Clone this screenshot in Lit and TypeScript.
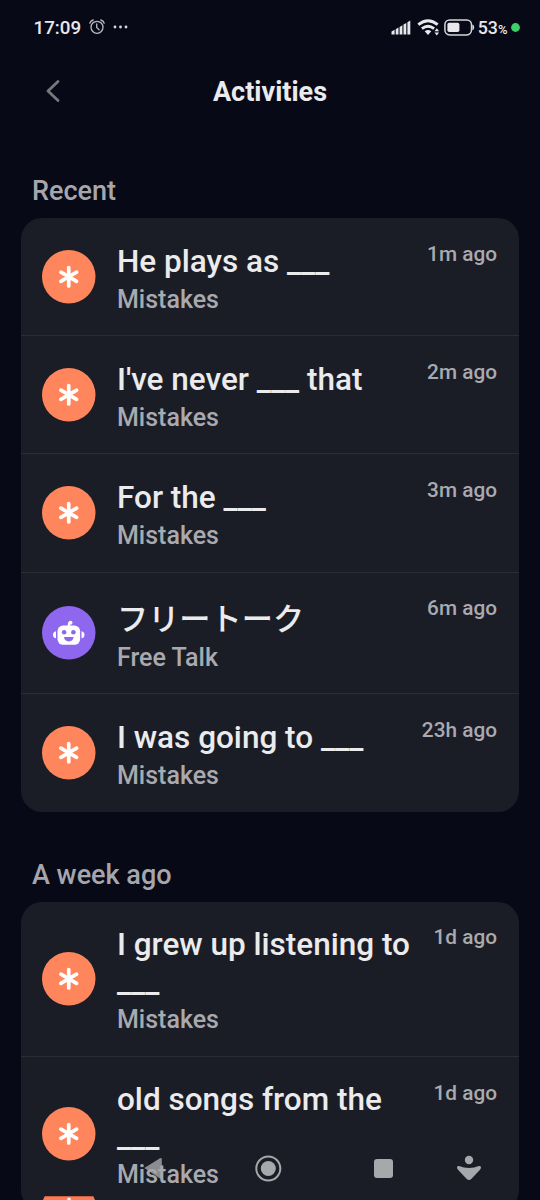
import { LitElement, html, css, svg } from "lit";
import { customElement, property } from "lit/decorators.js";

interface Activity {
  title: string;
  kind: "Mistakes" | "Free Talk";
  time: string;
}

const recent: Activity[] = [
  { title: "He plays as ___", kind: "Mistakes", time: "1m ago" },
  { title: "I've never ___ that", kind: "Mistakes", time: "2m ago" },
  { title: "For the ___", kind: "Mistakes", time: "3m ago" },
  { title: "フリートーク", kind: "Free Talk", time: "6m ago" },
  { title: "I was going to ___", kind: "Mistakes", time: "23h ago" },
];

const weekAgo: Activity[] = [
  { title: "I grew up listening to ___", kind: "Mistakes", time: "1d ago" },
  { title: "old songs from the ___", kind: "Mistakes", time: "1d ago" },
];

const asterisk = svg`
  <circle cx="26.75" cy="26.75" r="26.75" fill="#ff865c"/>
  <path d="M26.75 17.6v18.300M18.9 22.2l15.700 9.100M34.6 22.2l-15.700 9.100" stroke="#fff" stroke-width="3.700" stroke-linecap="round" fill="none"/>`;

const robot = svg`
  <circle cx="26.75" cy="26.75" r="26.75" fill="#8f66ee"/>
  <path d="M14 25.200a3.600 3.600 0 0 0 0 7.100zM39.500 25.200a3.600 3.600 0 0 1 0 7.100z" fill="#fff"/>
  <rect x="15.500" y="19.600" width="22.600" height="19.200" rx="5.600" fill="#fff"/>
  <path d="M26.800 20.500v-2.200q0-1.600 1.700-1.700" stroke="#fff" stroke-width="2.200" fill="none"/>
  <circle cx="28.500" cy="16.800" r="2" fill="#fff"/>
  <circle cx="22.100" cy="26.300" r="2.300" fill="#8f66ee"/>
  <circle cx="31.400" cy="26.300" r="2.300" fill="#8f66ee"/>
  <path d="M22 31h9.600q-.6 4.400-4.800 4.400T22 31z" fill="#8f66ee"/>`;

@customElement("activity-row")
export class ActivityRow extends LitElement {
  @property({ attribute: false }) item!: Activity;

  static styles = css`
    :host {
      display: flex;
      align-items: center;
      gap: 21.2px;
      box-sizing: border-box;
      padding: 25.7px 22px 21.3px 21.3px;
    }
    .icon {
      flex: none;
      width: 53.5px;
      height: 53.5px;
      margin-top: -4.4px;
      overflow: visible;
    }
    .text {
      flex: 1;
      min-width: 0;
      display: flex;
      flex-direction: column;
      gap: 4px;
    }
    .title {
      font-size: 31.5px;
      line-height: 36.9px;
      font-weight: 500;
      color: #ebebed;
    }
    .title.tall {
      padding-top: 3.6px;
      font-size: 31.2px;
    }
    .kind {
      font-size: 25px;
      line-height: 29.3px;
      font-weight: 500;
      color: #a9aaaf;
    }
    .time {
      align-self: flex-start;
      white-space: nowrap;
      font-size: 20.8px;
      line-height: 24.6px;
      margin-top: -1.8px;
      font-weight: 500;
      color: #a9aaaf;
    }
  `;

  render() {
    const talk = this.item.kind === "Free Talk";
    return html`
      <svg class="icon" viewBox="0 0 53.5 53.5">${talk ? robot : asterisk}</svg>
      <div class="text">
        <div class="title ${talk ? "tall" : ""}">${this.item.title}</div>
        <div class="kind">${this.item.kind}</div>
      </div>
      <div class="time">${this.item.time}</div>
    `;
  }
}

@customElement("status-bar")
export class StatusBar extends LitElement {
  static styles = css`
    :host {
      display: flex;
      align-items: center;
      justify-content: space-between;
      height: 54px;
      padding: 0 20px 0 33.5px;
      color: #e8e8ec;
    }
    .side {
      display: flex;
      align-items: center;
    }
    .clock {
      font-size: 18.8px;
      line-height: 22px;
      padding-top: 1px;
      font-weight: 500;
    }
    .alarm { margin: 0 8px 0 7.5px; }
    .wifi { margin: 0 4px 0 6px; }
    .charge {
      font-size: 17.8px;
      font-weight: 500;
      margin: 0 3.5px 0 3px;
    }
    .percent { font-size: 13px; }
  `;

  render() {
    return html`
      <div class="side">
        <span class="clock">17:09</span>
        <svg class="alarm" width="16" height="16" viewBox="0 0 16 16" fill="none" stroke="#b9bac2" stroke-width="1.300" stroke-linecap="round">
          <circle cx="8" cy="8.300" r="6"/>
          <path d="M7.700 5v3.500l2.400 2.200M.8 4.200Q1.600 1.700 4.200 1M15.200 4.200Q14.400 1.700 11.800 1"/>
        </svg>
        <svg width="16" height="4" viewBox="0 0 16 4" fill="#d8d8dc">
          <circle cx="2" cy="2" r="1.400"/><circle cx="7.500" cy="2" r="1.400"/><circle cx="13" cy="2" r="1.400"/>
        </svg>
      </div>
      <div class="side">
        <svg width="20" height="15" viewBox="0 0 20 15" fill="#e8e8ec">
          <path d="M.5 11.500 3.600 9.800V14.500H.5zM4.700 9.200l2.800-1.600v6.900H4.700zM8.600 6.900l2.800-1.600v9.200H8.600zM12.500 4.600l2.800-1.600v11.500h-2.800zM16.400 2.300 19.300.5v14h-2.900z"/>
        </svg>
        <svg class="wifi" width="23" height="17" viewBox="0 0 23 17" fill="none" stroke="#e8e8ec" stroke-width="2.800">
          <path d="M1.300 5.700Q11 -2.300 20.700 5.700M4.900 9.600Q11 4.800 17.100 9.600"/>
          <path d="M7.700 12.300Q11 9.900 14.300 12.300L11 16z" fill="#e8e8ec" stroke="none"/>
          <path d="M19.800 9.300l2.300 3h-4.600zM19.800 16.500l2.300-3h-4.600z" fill="#e8e8ec" stroke="none"/>
        </svg>
        <svg width="31" height="17" viewBox="0 0 31 17">
          <rect x=".9" y=".9" width="26.600" height="15" rx="4.800" fill="none" stroke="#d5d6da" stroke-width="1.500"/>
          <rect x="3.400" y="3.700" width="12" height="9.400" rx="1.800" fill="#e8e8ec"/>
          <path d="M28.300 5.600q1.900.3 1.900 2.800t-1.900 2.800z" fill="#d5d6da"/>
        </svg>
        <span class="charge">53<span class="percent">%</span></span>
        <svg width="9" height="9" viewBox="0 0 9 9"><circle cx="4.500" cy="4.500" r="4.400" fill="#3ad16b"/></svg>
      </div>
    `;
  }
}

@customElement("app-root")
export class AppRoot extends LitElement {
  static styles = css`
    :host {
      display: block;
      position: relative;
      box-sizing: border-box;
      height: 1200px;
      overflow: hidden;
      background: #070a16;
      font-family: Roboto, "Noto Sans CJK JP", sans-serif;
    }
    .header {
      display: grid;
      grid-template-columns: 1fr auto 1fr;
      align-items: center;
      height: 76px;
      padding: 0 45px;
    }
    .back { display: block; margin-top: -2px; }
    .heading {
      margin: 0;
      padding-top: 1px;
      font-size: 27px;
      line-height: 31px;
      font-weight: 700;
      color: #ebebed;
    }
    .section {
      margin: 0;
      padding-left: 32px;
      font-size: 27px;
      line-height: 31px;
      font-weight: 500;
      color: #a6a7ad;
    }
    .first { padding-top: 46px; }
    .next { padding-top: 48px; }
    .card {
      margin: 11px 21px 0;
      border-radius: 21px;
      background: #1b1d26;
      overflow: hidden;
    }
    .row + .row { border-top: 1px solid #2b2d35; }
    .nav {
      position: absolute;
      left: 0;
      right: 0;
      bottom: 0;
    }
  `;

  private card(items: Activity[]) {
    return html`<div class="card">
      ${items.map((item) => html`<activity-row class="row" .item=${item}></activity-row>`)}
    </div>`;
  }

  render() {
    return html`
      <status-bar></status-bar>
      <header class="header">
        <svg class="back" width="16" height="24" viewBox="0 0 16 24" fill="none" stroke="#77787e" stroke-width="2.800" stroke-linecap="round" stroke-linejoin="round">
          <path d="M13 2.400 3 12l10 9.600"/>
        </svg>
        <h1 class="heading">Activities</h1>
      </header>
      <h2 class="section first">Recent</h2>
      ${this.card(recent)}
      <h2 class="section next">A week ago</h2>
      ${this.card(weekAgo)}
      <svg class="nav" width="540" height="64" viewBox="0 0 540 64" fill="#a7a8ac">
        <path d="M144.300 32 160 22.200q1.800-.8 1.800 1V41.500q0 1.800-1.800 1z" opacity=".8"/>
        <circle cx="268.300" cy="32.500" r="12" fill="none" stroke="#a7a8ac" stroke-width="2"/>
        <circle cx="268.300" cy="32.500" r="7.500"/>
        <rect x="374" y="23" width="19" height="19" rx="3"/>
        <circle cx="469" cy="24" r="4.200"/>
        <path d="M459 30q10 4 20 0 2-.5 2 1.500 0 1-1 2.200l-8.500 9.100q-2.500 2.500-5 0l-8.500-9.100q-1-1.200-1-2.200 0-2 2-1.500z"/>
        <path d="M44.700 60.300H93.300L95 64H43z" fill="#ff7a50"/>
        <path d="M67.300 64v-.8a1.750 1.750 0 0 1 3.500 0v.8z" fill="#fff"/>
      </svg>
    `;
  }
}
